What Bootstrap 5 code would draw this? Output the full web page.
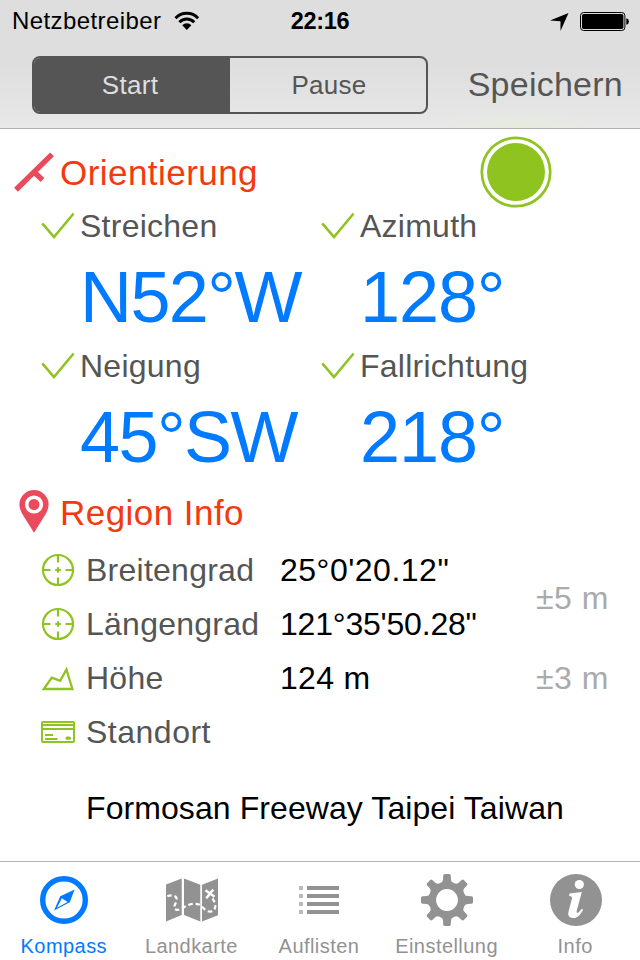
<!DOCTYPE html>
<html lang="de">
<head>
<meta charset="utf-8">
<meta name="viewport" content="width=device-width, initial-scale=1">
<title>Kompass</title>
<link href="https://cdn.jsdelivr.net/npm/bootstrap@5.3.0/dist/css/bootstrap.min.css" rel="stylesheet">
<style>
  :root { --ink:#555; --blue:#007aff; --red:#f4390e; --green:#8fc31f; --tab:#929292; }
  body { font-family:"Liberation Sans", Arial, sans-serif; background:#fff; color:#000; }
  .screen { width:640px; height:960px; overflow:hidden; }
  .topbar { height:129px; border-bottom:1px solid #b1b1b1;
    background:radial-gradient(90px 16px at 515px 128px, rgba(229,235,218,.8), transparent), linear-gradient(#dedede 50%, #e9e8e9); }
  .status { height:41px; font-size:24px; line-height:41px; display:grid; grid-template-columns:1fr auto 1fr; padding:0 12px 0 12px; }
  .status .carrier { letter-spacing:.4px; }
  .status .clock { font-weight:bold; font-size:23.5px; letter-spacing:-.3px; padding-top:1px; height:41px; }
  .status .indicators { margin-right:-1px; }
  .tools { padding:15px 17px 0 32px; }
  .segmented { width:396px; height:58px; border:2px solid var(--ink); border-radius:8px; overflow:hidden; }
  .segmented .btn { font-size:26px; line-height:54px; letter-spacing:.3px; color:var(--ink); border:0; border-radius:0; padding:0 0 0 2px; }
  .segmented .btn.active { background:var(--ink); color:#dedede; padding:0 4px 0 0; }
  .save { font-size:34px; line-height:56px; letter-spacing:.25px; color:var(--ink); padding:0 0 2px; border:0; }
  .orient { height:64px; }
  .region { height:47px; }
  .heading { height:40px; line-height:40px; font-size:35px; letter-spacing:.45px; color:var(--red); margin:0; font-weight:400; }
  .signal { margin:22px 88px 0 0; }
  .readings { display:grid; grid-template-columns:280px 280px; grid-auto-rows:140px; margin-left:40px; margin-top:13px; }
  .reading-label { height:40px; line-height:40px; font-size:32px; letter-spacing:.25px; color:var(--ink); }
  .reading-value { height:100px; line-height:102px; font-size:72px; letter-spacing:-1.1px; color:var(--blue); padding-left:40px; white-space:nowrap; }
  .reading-value.quadrant { letter-spacing:-1.6px; }
  .places { display:grid; grid-template-columns:46px 194px 248px 1fr; grid-auto-rows:54px; align-items:center; margin:10px 0 0 40px; font-size:32px; line-height:54px; letter-spacing:.3px; }
  .places .key { color:var(--ink); letter-spacing:.25px; }
  .places .val { white-space:nowrap; }
  .places .tol { color:#aaa; padding-left:8px; letter-spacing:.5px; }
  .places .span2 { grid-row:1 / span 2; grid-column:4; padding-top:2px; }
  .places .lat { letter-spacing:.5px; }
  .places .lon { letter-spacing:-.2px; }
  .places .place-key { letter-spacing:.5px; }
  .address { margin:22px 0 0 86px; height:54px; line-height:54px; font-size:32px; letter-spacing:.08px; white-space:nowrap; }
  .tabs { height:99px; width:640px; border-top:1px solid #b2b2b2; padding-right:2px; }
  .tabs .nav-link { color:var(--tab); font-size:20px; line-height:26px; letter-spacing:.45px; padding:8px 0 0; flex:1 1 0; }
  .tabs .nav-link.active { color:var(--blue); }
  .tabs .last-label { padding-left:2px; }
  .tabs svg { margin-bottom:3px; }
  svg { display:block; flex:none; }
</style>
</head>
<body>
<div class="screen d-flex flex-column">
  <header class="topbar flex-shrink-0">
    <div class="status">
      <div class="d-flex align-items-center">
        <span class="carrier">Netzbetreiber</span>
        <svg class="ms-2" width="32" height="40" viewBox="169 0 32 40">
          <g fill="none" stroke="#000" stroke-width="3">
            <path d="M175.500 17.200a15.600 15.600 0 0 1 22.600 0"/>
            <path d="M179.400 21.200a10.200 10.200 0 0 1 14.800 0"/>
          </g>
          <path d="M182.200 24.200a6.600 6.600 0 0 1 9.200 0L186.800 29z"/>
        </svg>
      </div>
      <span class="clock">22:16</span>
      <div class="indicators d-flex align-items-center justify-content-end">
        <svg width="80" height="40" viewBox="549 0 80 40">
          <path d="M568.500 12 560.500 30V20.200L550 19.500z"/>
          <rect x="580.500" y="11.500" width="44.400" height="18" rx="3.200" fill="none" stroke="#000"/>
          <rect x="582" y="13" width="41.400" height="15" rx="1.800"/>
          <path d="M626.300 17.200q2.600.6 2.600 3.300t-2.600 3.300z"/>
        </svg>
      </div>
    </div>
    <div class="tools d-flex justify-content-between">
      <div class="segmented d-flex">
        <button class="btn w-50 active" type="button">Start</button>
        <button class="btn w-50" type="button">Pause</button>
      </div>
      <button class="btn save" type="button">Speichern</button>
    </div>
  </header>

  <main class="flex-grow-1">
    <section>
      <div class="orient d-flex align-items-center">
        <svg width="60" height="64" viewBox="0 129 60 64">
          <path d="M16 189.800 52 154.400M33.800 171.800l8.700 8.200" fill="none" stroke="#ea4b5c" stroke-width="5.400"/>
        </svg>
        <h2 class="heading align-self-end">Orientierung</h2>
        <svg class="signal ms-auto" width="72" height="72" viewBox="480 136 72 72">
          <circle cx="516" cy="172" r="34.200" fill="none" stroke="#8fc31f" stroke-width="2.700"/>
          <circle cx="516" cy="172" r="29" fill="#8fc31f"/>
        </svg>
      </div>
      <div class="readings">
        <div>
          <div class="reading-label d-flex"><svg width="40" height="40" viewBox="40 206 40 40"><path d="M42.300 223.400 54 237 73.600 213.500" fill="none" stroke="#8fc31f" stroke-width="2.600"/></svg>Streichen</div>
          <div class="reading-value quadrant">N52°W</div>
        </div>
        <div>
          <div class="reading-label d-flex"><svg width="40" height="40" viewBox="40 206 40 40"><path d="M42.300 223.400 54 237 73.600 213.500" fill="none" stroke="#8fc31f" stroke-width="2.600"/></svg>Azimuth</div>
          <div class="reading-value">128°</div>
        </div>
        <div>
          <div class="reading-label d-flex"><svg width="40" height="40" viewBox="40 206 40 40"><path d="M42.300 223.400 54 237 73.600 213.500" fill="none" stroke="#8fc31f" stroke-width="2.600"/></svg>Neigung</div>
          <div class="reading-value quadrant">45°SW</div>
        </div>
        <div>
          <div class="reading-label d-flex"><svg width="40" height="40" viewBox="40 206 40 40"><path d="M42.300 223.400 54 237 73.600 213.500" fill="none" stroke="#8fc31f" stroke-width="2.600"/></svg>Fallrichtung</div>
          <div class="reading-value">218°</div>
        </div>
      </div>
    </section>

    <section>
      <div class="region d-flex align-items-end">
        <svg width="60" height="47" viewBox="0 486 60 47">
          <path d="M34 490a14.600 14.600 0 0 1 14.600 14.600c0 3.400-1.200 6-2.600 9L34 532.800 22 513.600c-1.400-3-2.600-5.600-2.600-9A14.600 14.600 0 0 1 34 490z" fill="#ea4b5c"/>
          <circle cx="34" cy="504.500" r="7.300" fill="#ea4b5c" stroke="#fff" stroke-width="3.600"/>
        </svg>
        <h2 class="heading">Region Info</h2>
      </div>
      <div class="places">
        <svg width="36" height="36" viewBox="40 552 36 36"><g fill="none" stroke="#8fc31f" stroke-width="2.200"><circle cx="58" cy="570" r="15"/><path d="M58 555v7.500M58 577.500v7.500M43 570h7.500M65.500 570h7.500M55.200 570h5.600M58 567.200v5.600"/></g></svg>
        <span class="key">Breitengrad</span><span class="val lat">25°0'20.12"</span><span class="tol span2">±5 m</span>
        <svg width="36" height="36" viewBox="40 552 36 36"><g fill="none" stroke="#8fc31f" stroke-width="2.200"><circle cx="58" cy="570" r="15"/><path d="M58 555v7.500M58 577.500v7.500M43 570h7.500M65.500 570h7.500M55.200 570h5.600M58 567.200v5.600"/></g></svg>
        <span class="key">Längengrad</span><span class="val lon">121°35'50.28"</span>
        <svg width="36" height="36" viewBox="40 660 36 36"><path d="M43.800 689 51.800 677.600 60.200 680.800 66.400 669.500 72.400 689z" fill="none" stroke="#8fc31f" stroke-width="2.300"/></svg>
        <span class="key">Höhe</span><span class="val">124 m</span><span class="tol">±3 m</span>
        <svg width="36" height="36" viewBox="40 714 36 36"><g fill="none" stroke="#8fc31f" stroke-width="2"><rect x="42" y="722" width="32" height="20" rx="1"/><path d="M42 725h32M42 729h32M45 735h8M45 739h12.500"/></g><rect x="65.500" y="736.500" width="5.500" height="3.200" rx="1.500" fill="#8fc31f"/></svg>
        <span class="key place-key">Standort</span>
      </div>
      <div class="address">Formosan Freeway Taipei Taiwan</div>
    </section>
  </main>

  <nav class="tabs nav flex-nowrap flex-shrink-0">
    <a class="nav-link active d-flex flex-column align-items-center" href="#">
      <svg width="60" height="60" viewBox="34 870 60 60"><circle cx="64" cy="900" r="21.300" fill="none" stroke="#007aff" stroke-width="5.400"/><path d="M74.600 889.400 69.800 902.300 54 910.600 60.300 896.200z" fill="#007aff"/><path d="M61.800 898.200 67.600 902 57 907.800z" fill="#fff"/></svg>
      Kompass</a>
    <a class="nav-link d-flex flex-column align-items-center" href="#">
      <svg width="60" height="60" viewBox="161 870 60 60"><path d="M166 884.500 181.700 878.500V915L166 921.500zM184 878.500 200.300 884.800V921.500L184 915zM202 884.800 218 878.500V915.300L202 921.500z" fill="#929292"/><g fill="none" stroke="#fff" stroke-width="2.200"><path d="M167.300 896.200C171 894.800 177 895 176.700 899.500S172.500 906.500 175 909C178 911.500 182.500 908 186 906S195 903 199 904.500S204.500 911.500 210 911.600S216 906 214.800 902.500L212 897.500" stroke-dasharray="4.400 2.900"/><path d="M205.500 890.200l9 6.600M213.300 889.500l-7 8.800" stroke-width="2.500"/></g></svg>
      Landkarte</a>
    <a class="nav-link d-flex flex-column align-items-center" href="#">
      <svg width="60" height="60" viewBox="289 870 60 60"><path d="M299 888h4M299 896h4M299 904h4M299 912h4" stroke="#bababa" stroke-width="4"/><path d="M307 888h32M307 896h32M307 904h32M307 912h32" stroke="#929292" stroke-width="4"/></svg>
      Auflisten</a>
    <a class="nav-link d-flex flex-column align-items-center" href="#">
      <svg width="60" height="60" viewBox="-30 -30 60 60"><g fill="#929292"><g id="teeth"><path id="tooth" d="M-6.500-17Q-4-18-4-20.500L-3.800-24.500Q-3.600-26-2.200-26H2.200Q3.600-26 3.800-24.500L4-20.500Q4-18 6.500-17z"/><use href="#tooth" transform="rotate(45)"/><use href="#tooth" transform="rotate(90)"/><use href="#tooth" transform="rotate(135)"/></g><use href="#teeth" transform="rotate(180)"/></g><circle r="14.600" fill="none" stroke="#929292" stroke-width="7.400"/></svg>
      Einstellung</a>
    <a class="nav-link d-flex flex-column align-items-center" href="#">
      <svg width="60" height="60" viewBox="544 870 60 60"><circle cx="576" cy="900" r="26" fill="#929292"/><circle cx="579.300" cy="884.500" r="4.600" fill="#fff"/><path d="M569.500 893.500 581.800 892 576.800 910.500c-.7 2.700.7 2.900 2.200 1.600l2.800-3.400 1.300 1c-2.500 4.700-5.500 8.300-9.900 8.300-4.200 0-5.600-2.500-4.700-6.200l3.400-13c.4-2-.3-2.800-2.800-2.800z" fill="#fff"/></svg>
      <span class="last-label">Info</span></a>
  </nav>
</div>
<script src="https://cdn.jsdelivr.net/npm/bootstrap@5.3.0/dist/js/bootstrap.bundle.min.js"></script>
</body>
</html>
